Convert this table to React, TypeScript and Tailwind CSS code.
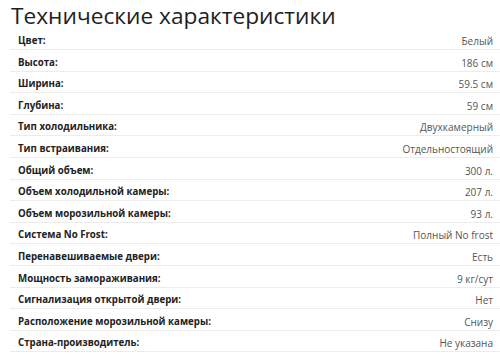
const specs: [string, string][] = [
  ["Цвет:", "Белый"],
  ["Высота:", "186 см"],
  ["Ширина:", "59.5 см"],
  ["Глубина:", "59 см"],
  ["Тип холодильника:", "Двухкамерный"],
  ["Тип встраивания:", "Отдельностоящий"],
  ["Общий объем:", "300 л."],
  ["Объем холодильной камеры:", "207 л."],
  ["Объем морозильной камеры:", "93 л."],
  ["Система No Frost:", "Полный No frost"],
  ["Перенавешиваемые двери:", "Есть"],
  ["Мощность замораживания:", "9 кг/сут"],
  ["Сигнализация открытой двери:", "Нет"],
  ["Расположение морозильной камеры:", "Снизу"],
  ["Страна-производитель:", "Не указана"],
];

export default function App() {
  return (
    <div className="bg-white h-[354px] overflow-hidden pl-[10px] font-['Open_Sans','Liberation_Sans',sans-serif]">
      {/* Title */}
      <div className="h-[28.4px] flex items-end">
        <h1 className="text-[22.7px] leading-[26px] ml-[1px] mb-[-1px] text-[#1e1e1e] font-medium whitespace-nowrap">
          Технические характеристики
        </h1>
      </div>

      {/* Spec rows */}
      <div>
        {specs.map(([label, value]) => (
          <div
            key={label}
            className="flex justify-between items-end h-[21.6px] border-b border-[#ececec] pl-2 pr-[7px] pb-[1px] text-[10px] leading-[14px]"
          >
            <span className="font-bold text-[#222] text-[9.7px]">{label}</span>
            <span className="text-[#555]">{value}</span>
          </div>
        ))}
      </div>
    </div>
  );
}
